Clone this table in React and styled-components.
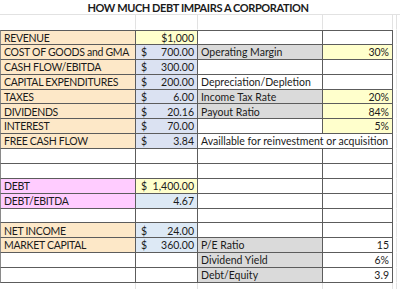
import React from 'react';
import styled, { createGlobalStyle } from 'styled-components';

const GlobalStyle = createGlobalStyle`
  html, body {
    margin: 0;
    padding: 0;
    background: #ffffff;
  }
  body {
    font-family: Lato, "Liberation Sans", sans-serif;
    color: #1b1b1b;
  }
`;

const PEACH = '#fde8c8';
const YELLOW = '#ffffcc';
const LAVENDER = '#dbe2f2';
const SKY = '#dde9f5';
const GRAY = '#dadada';
const PINK = '#ffccff';

const rows = [
  [
    { text: 'REVENUE', bg: PEACH },
    { text: '$1,000', bg: YELLOW, align: 'right' },
    {},
    {}
  ],
  [
    { text: 'COST OF GOODS and GMA', bg: PEACH },
    { money: '700.00', bg: LAVENDER },
    { text: 'Operating Margin', bg: GRAY },
    { text: '30%', bg: YELLOW, align: 'right' }
  ],
  [
    { text: 'CASH FLOW/EBITDA', bg: PEACH },
    { money: '300.00', bg: LAVENDER },
    {},
    {}
  ],
  [
    { text: 'CAPITAL EXPENDITURES', bg: PEACH },
    { money: '200.00', bg: LAVENDER },
    { text: 'Depreciation/Depletion' },
    {}
  ],
  [
    { text: 'TAXES', bg: PEACH },
    { money: '6.00', bg: LAVENDER },
    { text: 'Income Tax Rate', bg: GRAY },
    { text: '20%', bg: YELLOW, align: 'right' }
  ],
  [
    { text: 'DIVIDENDS', bg: PEACH },
    { money: '20.16', bg: LAVENDER },
    { text: 'Payout Ratio', bg: GRAY },
    { text: '84%', bg: YELLOW, align: 'right' }
  ],
  [
    { text: 'INTEREST', bg: PEACH },
    { money: '70.00', bg: LAVENDER },
    {},
    { text: '5%', bg: YELLOW, align: 'right' }
  ],
  [
    { text: 'FREE CASH FLOW', bg: PEACH },
    { money: '3.84', bg: LAVENDER },
    { text: 'Availlable for reinvestment or acquisition', span: 2 }
  ],
  [{}, {}, {}, {}],
  [{}, {}, {}, {}],
  [
    { text: 'DEBT', bg: PINK },
    { money: '1,400.00', bg: YELLOW },
    {},
    {}
  ],
  [
    { text: 'DEBT/EBITDA', bg: PINK },
    { text: '4.67', bg: SKY, align: 'right' },
    {},
    {}
  ],
  [{}, {}, {}, {}],
  [
    { text: 'NET INCOME', bg: PEACH },
    { money: '24.00', bg: SKY },
    {},
    {}
  ],
  [
    { text: 'MARKET CAPITAL', bg: PEACH },
    { money: '360.00', bg: SKY },
    { text: 'P/E Ratio', bg: GRAY },
    { text: '15', align: 'right' }
  ],
  [
    {},
    {},
    { text: 'Dividend Yield', bg: GRAY },
    { text: '6%', align: 'right' }
  ],
  [
    {},
    {},
    { text: 'Debt/Equity', bg: GRAY },
    { text: '3.9', align: 'right' }
  ]
];

export default function App() {
  return (
    <>
      <GlobalStyle />
      <Sheet>
        <Title>HOW MUCH DEBT IMPAIRS A CORPORATION</Title>
        <GhostCell />
        <GhostCell />
        <GhostCell />
        <GhostCell />
        <GhostCell $last />
        {rows.map((row, r) => (
          <React.Fragment key={r}>
            {row.map((cell, c) => (
              <Cell
                key={c}
                $bg={cell.bg}
                $align={cell.align}
                $span={cell.span}
                $top={r === 0}
                $first={c === 0}
              >
                {cell.money ? (
                  <>
                    <span>$</span>
                    <span>{cell.money}</span>
                  </>
                ) : (
                  cell.text
                )}
              </Cell>
            ))}
            <GhostCell $last />
          </React.Fragment>
        ))}
        <GhostCell $under />
        <GhostCell $under />
        <GhostCell $under />
        <GhostCell $under />
        <GhostCell $last $under />
      </Sheet>
    </>
  );
}

const Sheet = styled.div`
  display: grid;
  grid-template-columns: 136px 62px 125px 70px 7px;
  grid-template-rows: 15px 15px repeat(17, 14.88px) 6px;
  width: 400px;
  height: 289px;
  overflow: hidden;
  font-size: 10.5px;
`;

const Title = styled.div`
  grid-column: 1 / span 5;
  display: flex;
  align-items: center;
  justify-content: center;
  padding: 1px 4px 0 0;
  font-size: 11px;
  font-weight: 700;
  letter-spacing: -0.4px;
  border-bottom: 1px solid #e2e2e2;
  box-sizing: border-box;
`;

const GhostCell = styled.div`
  box-sizing: border-box;
  border-right: ${(p) => (p.$last ? 'none' : '1px solid #e2e2e2')};
  border-bottom: ${(p) => (p.$under ? 'none' : '1px solid transparent')};
  border-left: ${(p) => (p.$last ? '1px solid #e2e2e2' : 'none')};
  margin-left: ${(p) => (p.$last ? '3px' : '0')};
`;

const Cell = styled.div`
  grid-column: span ${(p) => p.$span || 1};
  box-sizing: border-box;
  display: flex;
  align-items: center;
  justify-content: ${(p) =>
    p.$align === 'right' ? 'flex-end' : 'space-between'};
  padding: 1px 3px 0 3px;
  background: ${(p) => p.$bg || '#ffffff'};
  border-right: 1px solid #5c5c5c;
  border-bottom: 1px solid #5c5c5c;
  border-top: ${(p) => (p.$top ? '1px solid #5c5c5c' : 'none')};
  border-left: ${(p) => (p.$first ? '1px solid #8a8a8a' : 'none')};
  letter-spacing: ${(p) => (p.$first ? '-0.3px' : '0')};
  white-space: nowrap;
  overflow: hidden;
  line-height: 1;

  & > span:first-child {
    padding-left: 2px;
  }
`;
